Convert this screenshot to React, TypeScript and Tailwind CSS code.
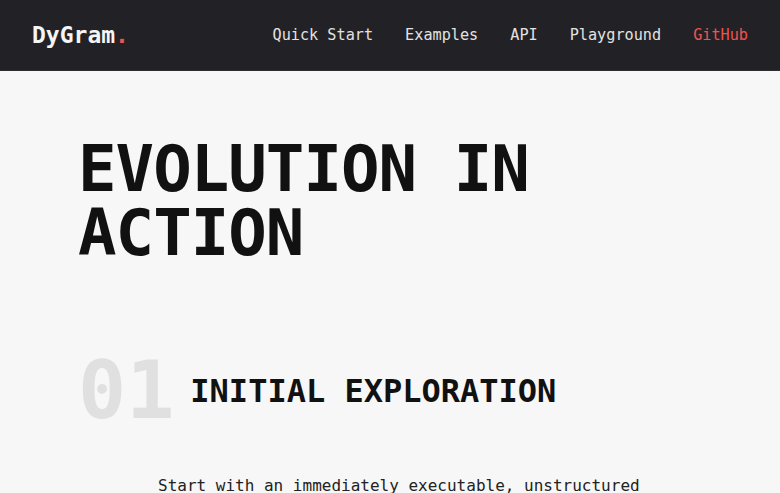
const NAV = ["Quick Start", "Examples", "API", "Playground"];

export default function App() {
  return (
    <div className="min-h-screen bg-[#f7f7f7] font-['DejaVu_Sans_Mono',monospace] text-[#111]">
      <header className="flex h-[71px] items-center justify-between border-b border-[#2c2c31] bg-[#222226] px-8">
        <div className="text-[23px] font-bold text-[#f5f5f5]">
          DyGram<span className="text-[#ef5350]">.</span>
        </div>
        <nav className="flex items-center gap-8 text-[15.2px] text-[#e2e2e2]">
          {NAV.map((n) => (
            <a key={n} href="#">
              {n}
            </a>
          ))}
          <a href="#" className="text-[#ef5350]">
            GitHub
          </a>
        </nav>
      </header>

      <main className="pl-[78px] pr-20 pt-[66px]">
        <h1 className="text-[64px] font-bold leading-none tracking-[-0.015em] text-[#111]">
          EVOLUTION IN
          <br />
          ACTION
        </h1>

        <section className="mt-[86px]">
          <div className="flex items-center gap-4">
            <span className="text-[80px] font-bold leading-none text-[#e0e0e0]">01</span>
            <h2 className="text-[32px] font-bold leading-none text-[#111]">INITIAL EXPLORATION</h2>
          </div>
          <p className="ml-[80px] mt-[43px] max-w-[500px] text-[16px] leading-6 text-[#222]">
            Start with an immediately executable, unstructured sketch of an idea.
          </p>
        </section>
      </main>
    </div>
  );
}
